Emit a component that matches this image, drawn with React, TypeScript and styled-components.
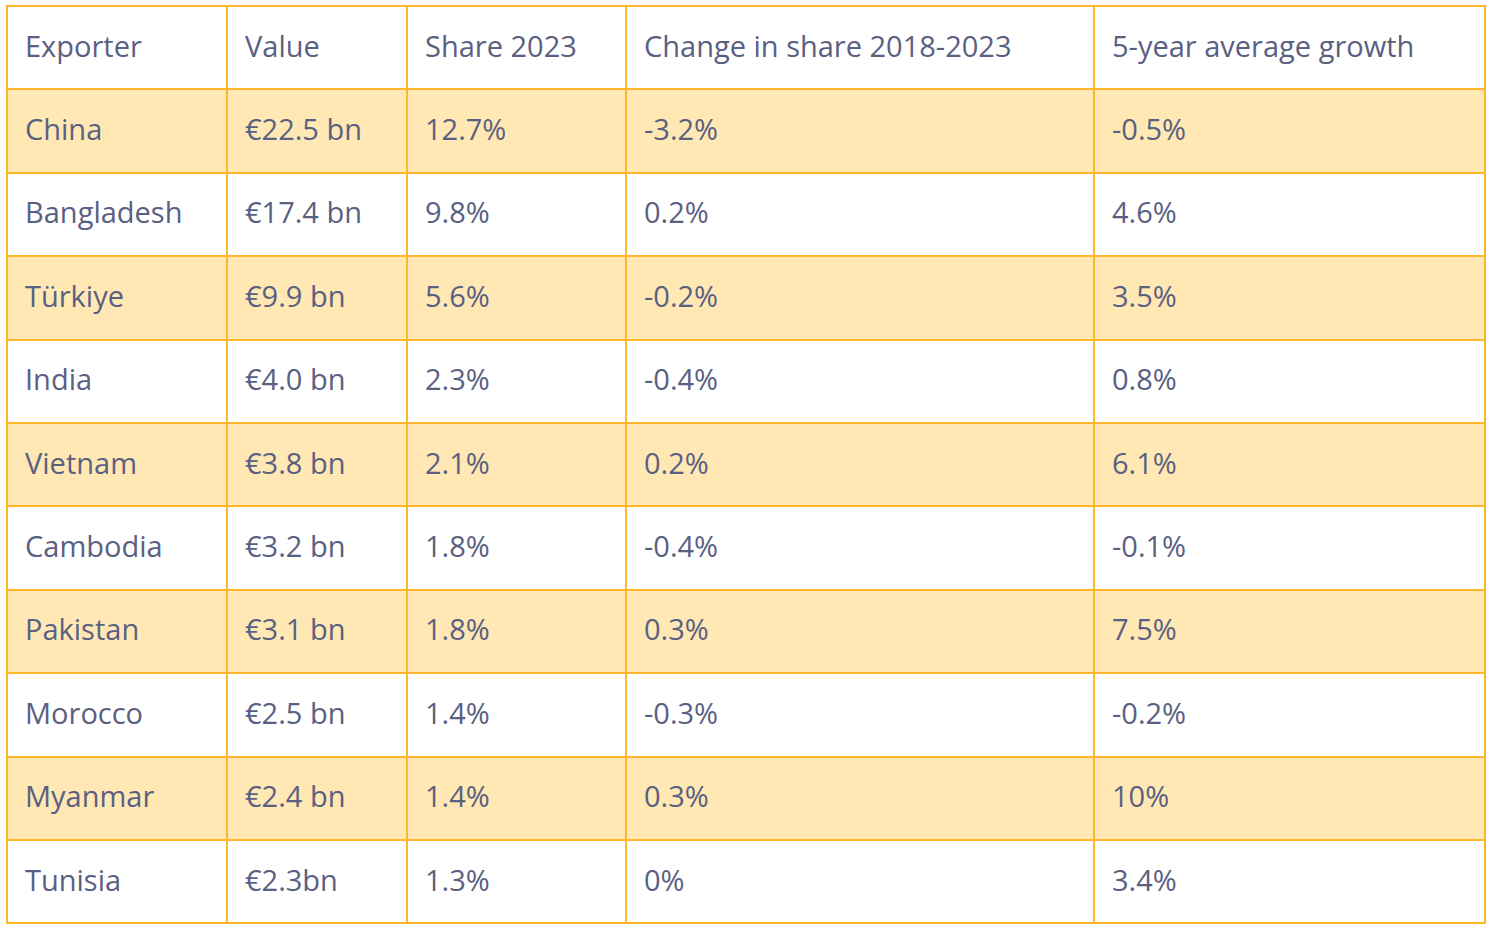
import React from "react";
import styled, { createGlobalStyle } from "styled-components";

const Global = createGlobalStyle`
  html, body { margin: 0; padding: 0; background: #ffffff; }
  body { font-family: "Open Sans", "Noto Sans", sans-serif; }
`;

const Page = styled.div`
  padding: 5px 0 0 6px;
`;

const Table = styled.table`
  border-collapse: collapse;
  table-layout: fixed;
  width: 1478px;
  color: #5a6082;
  font-size: 29px;
`;

const Cell = styled.td<{ $w?: number }>`
  border: 2px solid #ffb628;
  height: 83.4px;
  padding: 0 0 5px 17px;
  box-sizing: border-box;
  vertical-align: middle;
  text-align: left;
  font-weight: 400;
  white-space: nowrap;
  letter-spacing: 0;
  ${(p) => (p.$w ? `width: ${p.$w}px;` : "")}
`;

const HeadCell = styled(Cell).attrs({ as: "th" })``;

const Row = styled.tr<{ $shaded: boolean }>`
  background: ${(p) => (p.$shaded ? "#ffe8b3" : "#ffffff")};
`;

const widths = [220, 180, 219, 468, 391];
const headers = ["Exporter", "Value", "Share 2023", "Change in share 2018-2023", "5-year average growth"];

const rows: string[][] = [
  ["China", "€22.5 bn", "12.7%", "-3.2%", "-0.5%"],
  ["Bangladesh", "€17.4 bn", "9.8%", "0.2%", "4.6%"],
  ["Türkiye", "€9.9 bn", "5.6%", "-0.2%", "3.5%"],
  ["India", "€4.0 bn", "2.3%", "-0.4%", "0.8%"],
  ["Vietnam", "€3.8 bn", "2.1%", "0.2%", "6.1%"],
  ["Cambodia", "€3.2 bn", "1.8%", "-0.4%", "-0.1%"],
  ["Pakistan", "€3.1 bn", "1.8%", "0.3%", "7.5%"],
  ["Morocco", "€2.5 bn", "1.4%", "-0.3%", "-0.2%"],
  ["Myanmar", "€2.4 bn", "1.4%", "0.3%", "10%"],
  ["Tunisia", "€2.3bn", "1.3%", "0%", "3.4%"],
];

export default function App() {
  return (
    <>
      <Global />
      <Page>
        <Table>
          <thead>
            <Row $shaded={false}>
              {headers.map((h, i) => (
                <HeadCell key={h} $w={widths[i]}>
                  {h}
                </HeadCell>
              ))}
            </Row>
          </thead>
          <tbody>
            {rows.map((r, ri) => (
              <Row key={r[0]} $shaded={ri % 2 === 0}>
                {r.map((c, ci) => (
                  <Cell key={ci}>{c}</Cell>
                ))}
              </Row>
            ))}
          </tbody>
        </Table>
      </Page>
    </>
  );
}
